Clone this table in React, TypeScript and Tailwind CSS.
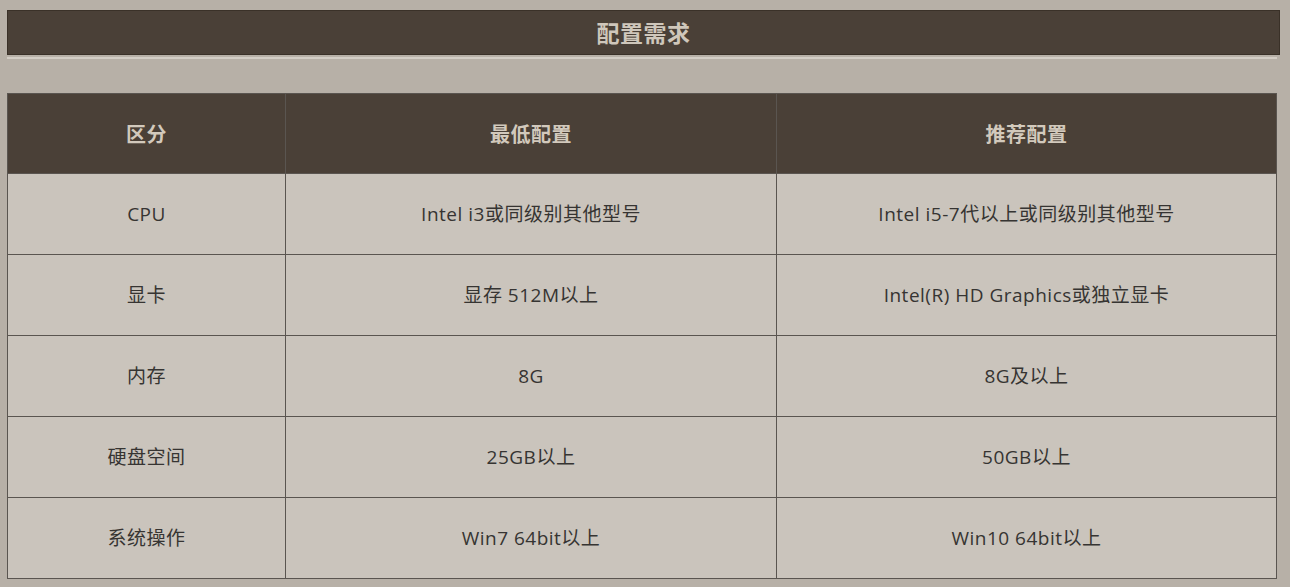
import React from "react";

const rows: [string, string, string][] = [
  ["CPU", "Intel i3或同级别其他型号", "Intel i5-7代以上或同级别其他型号"],
  ["显卡", "显存 512M以上", "Intel(R) HD Graphics或独立显卡"],
  ["内存", "8G", "8G及以上"],
  ["硬盘空间", "25GB以上", "50GB以上"],
  ["系统操作", "Win7 64bit以上", "Win10 64bit以上"],
];

export default function App() {
  return (
    <div
      className="w-[1290px] h-[587px] bg-[#b7b0a7] pt-[10px] pl-[7px] overflow-hidden"
      style={{ fontFamily: '"Open Sans", "Noto Sans CJK SC", sans-serif' }}
    >
      <div
        className="w-[1273px] h-[45px] bg-[#4a4037] border border-[#3a3128] flex items-center justify-center text-[23px] tracking-[0.5px] font-bold text-[#cfc7bb]"
        style={{ fontFamily: '"Noto Sans CJK SC", sans-serif' }}
      >
        配置需求
      </div>
      <div className="w-[1270px] h-[2px] mt-[2px] bg-[#d3cdc5]" />
      <table className="mt-[34px] border-collapse w-[1269px] table-fixed">
        <colgroup>
          <col className="w-[278px]" />
          <col className="w-[491px]" />
          <col className="w-[500px]" />
        </colgroup>
        <thead>
          <tr className="h-[80px] bg-[#4a4037]">
            {["区分", "最低配置", "推荐配置"].map((h) => (
              <th
                key={h}
                className="border border-[#5a5550] text-[20px] tracking-[0.5px] leading-none font-bold text-[#d2c9bc] text-center"
                style={{ fontFamily: '"Noto Sans CJK SC", sans-serif' }}
              >
                {h}
              </th>
            ))}
          </tr>
        </thead>
        <tbody>
          {rows.map((r) => (
            <tr key={r[0]} className="h-[81px] bg-[#cac4bc]">
              {r.map((c, i) => (
                <td
                  key={i}
                  className="border border-[#5a5550] text-[19px] tracking-[0.5px] leading-none text-[#363432] text-center align-middle"
                >
                  {c}
                </td>
              ))}
            </tr>
          ))}
        </tbody>
      </table>
    </div>
  );
}
